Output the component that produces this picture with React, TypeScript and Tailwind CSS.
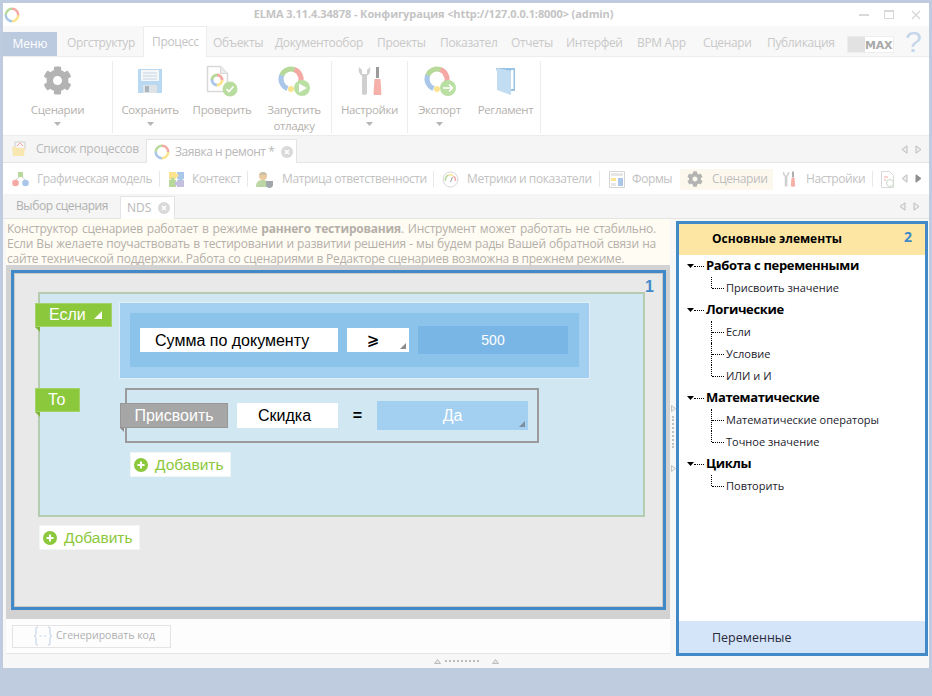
import React from "react";
import { FaCog } from "react-icons/fa";

const G = "#b7d99a", R = "#f4a9a4", Y = "#fbe38f", B = "#aac7ea";

function Ring({ size = 30, sw = 6 }: { size?: number; sw?: number }) {
  const r = 16 - sw / 2 - 1;
  const c = 2 * Math.PI * r;
  const seg = c / 4;
  return (
    <svg width={size} height={size} viewBox="0 0 32 32" className="shrink-0">
      {[[G, 180], [R, 270], [Y, 0], [B, 90]].map(([col, rot], i) => (
        <circle key={i} cx="16" cy="16" r={r} fill="none" stroke={col as string} strokeWidth={sw}
          strokeDasharray={`${seg} ${c - seg}`} transform={`rotate(${rot} 16 16)`} />
      ))}
    </svg>
  );
}

function BadgeRing({ kind }: { kind: "run" | "export" | "check" }) {
  return (
    <svg width="34" height="32" viewBox="0 0 34 32">
      <circle cx="14" cy="14" r="10" fill="none" stroke={G} strokeWidth="5" strokeDasharray="16 47" transform="rotate(200 14 14)" />
      <circle cx="14" cy="14" r="10" fill="none" stroke={R} strokeWidth="5" strokeDasharray="16 47" transform="rotate(290 14 14)" />
      <circle cx="14" cy="14" r="10" fill="none" stroke={B} strokeWidth="5" strokeDasharray="16 47" transform="rotate(110 14 14)" />
      <circle cx="14" cy="24" r="3" fill={Y} />
      <path d="M22 4l5 10-7-3z" fill={R} />
      <circle cx="25" cy="23" r="8" fill={kind === "check" ? "#b7dc9c" : "#b9dfa3"} />
      {kind === "run" && <path d="M22 18.500l8 4.500-8 4.500z" fill="#fff" />}
      {kind === "export" && <path d="M20 23h9M26 19.500l3.500 3.500-3.500 3.500" stroke="#fff" strokeWidth="1.600" fill="none" />}
    </svg>
  );
}

function SaveIcon() {
  return (
    <svg width="26" height="26" viewBox="0 0 26 26">
      <path d="M1 1h24v24H1z" fill="#b9d9f2" />
      <path d="M4 2h18v11H4z" fill="#f4f6f8" />
      <path d="M6 5h14M6 8h14M6 11h14" stroke="#c6d6e4" />
      <path d="M6 17h14v8H6z" fill="#dfe3e6" />
      <path d="M8 18h4v6H8z" fill="#a9b4bd" />
    </svg>
  );
}

function CheckIcon() {
  return (
    <svg width="32" height="32" viewBox="0 0 32 32">
      <path d="M1.500 1.500h13l7 7v18h-20z" fill="#fff" stroke="#d9d9d9" strokeWidth="1.500" />
      <path d="M14.500 1.500v7h7" fill="#ececec" stroke="#d9d9d9" />
      <circle cx="11" cy="15" r="5" fill="none" stroke={R} strokeWidth="3" strokeDasharray="8 24" transform="rotate(270 11 15)" />
      <circle cx="11" cy="15" r="5" fill="none" stroke={G} strokeWidth="3" strokeDasharray="8 24" transform="rotate(180 11 15)" />
      <circle cx="11" cy="15" r="5" fill="none" stroke={B} strokeWidth="3" strokeDasharray="8 24" transform="rotate(90 11 15)" />
      <circle cx="11" cy="15" r="5" fill="none" stroke={Y} strokeWidth="3" strokeDasharray="8 24" />
      <circle cx="24" cy="24" r="7.500" fill="#b9dc9f" />
      <path d="M20.500 24l2.500 2.500 4.500-5" stroke="#fff" strokeWidth="1.600" fill="none" />
    </svg>
  );
}

function ToolsIcon({ s = 26 }: { s?: number }) {
  return (
    <svg width={s} height={s * 1.15} viewBox="0 0 26 30">
      <path d="M2 1c-1 4 0 7 3 9v18c0 1 5 1 5 0V10c3-2 4-5 3-9l-3 3v4H5V4z" fill="#cfcfcf" />
      <path d="M19 1h3v11h-3z" fill="#9a9a9a" />
      <path d="M17.500 13h6l1 15c0 2-8 2-8 0z" fill="#f6b0aa" />
    </svg>
  );
}

function BookIcon() {
  return (
    <svg width="20" height="28" viewBox="0 0 20 28">
      <path d="M0 1h19v23H6z" fill="#9ac3e3" />
      <path d="M1 1l14 3v24L1 23z" fill="#c2dcf1" />
      <path d="M15 3h2.500v19H15z" fill="#fff" />
    </svg>
  );
}

function Folder() {
  return (
    <svg width="16" height="16" viewBox="0 0 16 16">
      <path d="M3 1h10v7H3z" fill="#f6f6f6" stroke="#cfcfcf" />
      <path d="M5 5l3-3 3 3" stroke={R} fill="none" />
      <path d="M0 6h5l1 1h7l-1 8H1z" fill="#f9e7b2" />
    </svg>
  );
}

function GraphIcon() {
  return (
    <svg width="17" height="16" viewBox="0 0 17 16">
      <path d="M8.500 4L3 10M8.500 4l5.500 6" stroke="#cdcdcd" />
      <path d="M6 1h5v5H6z" fill="#b7d99a" />
      <circle cx="3.500" cy="12" r="3.300" fill={R} />
      <circle cx="13.500" cy="12" r="3.300" fill={B} />
    </svg>
  );
}

function PuzzleIcon() {
  return (
    <svg width="17" height="17" viewBox="0 0 17 17">
      <path d="M1 1h7v7H1z" fill="#fbe38f" />
      <path d="M9 1h7v7H9z" fill={B} />
      <path d="M1 9h7v7H1z" fill={G} />
      <path d="M9 9h7v7H9z" fill="#c4c0dd" />
      <circle cx="8.500" cy="4.500" r="2" fill="#fbe38f" />
      <circle cx="4.500" cy="8.500" r="2" fill={G} />
      <circle cx="12.500" cy="8.500" r="2" fill={B} />
      <circle cx="8.500" cy="12.500" r="2" fill="#c4c0dd" />
    </svg>
  );
}

function UserIcon() {
  return (
    <svg width="17" height="17" viewBox="0 0 17 17">
      <circle cx="7" cy="5" r="4" fill="#eacb9f" />
      <path d="M3 4c1-4 7-4 8 0z" fill="#c9c0a8" />
      <path d="M0 16c0-6 3-7 7-7s6 2 6 7z" fill="#bcd6a6" />
      <path d="M10 10h7v4c0 2-2 3-3.500 3S10 16 10 14z" fill="#9fa7ad" />
    </svg>
  );
}

function GaugeIcon() {
  return (
    <svg width="17" height="17" viewBox="0 0 17 17">
      <circle cx="8.500" cy="8.500" r="7.500" fill="#fff" stroke="#d8d8d8" />
      <path d="M3.500 10a5.500 5.500 0 0 1 3-6" stroke={G} strokeWidth="1.500" fill="none" />
      <path d="M7 4a5.500 5.500 0 0 1 4 .6" stroke={Y} strokeWidth="1.500" fill="none" />
      <path d="M11.500 5a5.500 5.500 0 0 1 2 5" stroke={R} strokeWidth="1.500" fill="none" />
      <path d="M8.500 11l2-5" stroke="#9a9a9a" />
    </svg>
  );
}

function FormIcon() {
  return (
    <svg width="16" height="17" viewBox="0 0 16 17">
      <path d="M.5.500h15v16H.5z" fill="#fff" stroke="#d5d5d5" />
      <path d="M2 2h12v3H2z" fill="#e6e6e6" />
      <path d="M2 7h5v3H2z" fill={Y} />
      <path d="M9 7h5v8H9z" fill={B} />
      <path d="M2 12h5v3H2z" fill="#e6e6e6" />
    </svg>
  );
}

function DocClock() {
  return (
    <svg width="13" height="17" viewBox="0 0 13 17">
      <path d="M.5.500h8l4 4v12H.5z" fill="#fff" stroke="#d8d8d8" />
      <path d="M3 6h4M3 9h2" stroke={R} />
      <circle cx="9" cy="12" r="3.500" fill="#fff" stroke="#c8d8c8" />
    </svg>
  );
}

function BraceIcon() {
  return (
    <svg width="20" height="20" viewBox="0 0 20 20" className="shrink-0">
      <path d="M5 1C2.500 1 3 3 3 6c0 3-1 4-2 4 1 0 2 1 2 4 0 3-.5 5 2 5M15 1c2.500 0 2 2 2 5 0 3 1 4 2 4-1 0-2 1-2 4 0 3 .5 5-2 5" fill="none" stroke="#d3e0ee" strokeWidth="1.600" />
      <path d="M6.500 10h2M11 10h2" stroke="#d3e0ee" strokeWidth="1.400" />
    </svg>
  );
}

function XDot({ cls = "" }: { cls?: string }) {
  return (
    <svg width="12" height="12" viewBox="0 0 12 12" className={`shrink-0 ${cls}`}>
      <circle cx="6" cy="6" r="6" fill="#d9d9d9" />
      <path d="M4 4l4 4M8 4l-4 4" stroke="#fff" strokeWidth="1.500" />
    </svg>
  );
}

function Arrows({ solid = false }: { solid?: boolean }) {
  return (
    <div className="flex gap-[7px] items-center">
      <svg width="7" height="9" viewBox="0 0 7 9"><path d="M6 .8L1 4.500 6 8.200z" fill="#ededed" stroke="#bdbdbd" /></svg>
      <svg width="7" height="9" viewBox="0 0 7 9"><path d="M1 .8L6 4.500 1 8.200z" fill={solid ? "#8f8f8f" : "#ededed"} stroke={solid ? "#8f8f8f" : "#bdbdbd"} /></svg>
    </div>
  );
}

function Caret() {
  return <svg width="7" height="4" viewBox="0 0 7 4"><path d="M0 0h7L3.500 4z" fill="#b5b5b5" /></svg>;
}

const menu: [string, number, number][] = [
  ["Оргструктур", 86, 10],
  ["Процесс", 64, 8],
  ["Объекты", 62, 6],
  ["Документообор", 101, 6],
  ["Проекты", 63, 7],
  ["Показател", 71, 7],
  ["Отчеты", 55, 7],
  ["Интерфей", 71, 7],
  ["BPM App", 66, 7],
  ["Сценари", 64, 7],
  ["Публикация", 87, 7],
];

function RibbonItem({ w, icon, label, label2, caret }: { w: string; icon: React.ReactNode; label: string; label2?: string; caret?: boolean }) {
  return (
    <div className={`${w} flex flex-col items-center shrink-0`}>
      <div className="h-[31px] mt-[8px] flex items-center justify-center">{icon}</div>
      <div className="mt-[6px] h-[16px] leading-[16px] text-[11.500px] tracking-[-0.35px] text-[#b5b1ad] whitespace-nowrap">{label}</div>
      {label2 && <div className="h-[16px] leading-[16px] text-[11.500px] tracking-[-0.35px] text-[#b5b1ad]">{label2}</div>}
      {caret && <div className="mt-[4px]"><Caret /></div>}
    </div>
  );
}

const Sep = () => <div className="w-px h-[72px] mt-[4px] bg-[#ececec] shrink-0" />;
const SubSep = () => <div className="w-px h-[16px] bg-[#e8e8e8] shrink-0" />;

function Sub({ icon, text, iw, gap, tw, cls = "" }: { icon: React.ReactNode; text: string; iw: string; gap: string; tw: string; cls?: string }) {
  return (
    <div className={`flex items-center shrink-0 ${cls}`}>
      <div className={`${iw} flex justify-center shrink-0`}>{icon}</div>
      <span className={`${gap} ${tw} text-[12px] text-[#c2c2c2] whitespace-nowrap tracking-[-0.4px]`}>{text}</span>
    </div>
  );
}

function Tag({ children, w }: { children: React.ReactNode; w: string }) {
  return (
    <div className={`relative ${w} h-[24px] bg-[#8cc83c] border border-[#a4d36b] shrink-0 flex items-center text-[16px] text-white`}>
      {children}
      <div className="absolute left-[-1px] top-[23px] w-0 h-0 border-t-[5px] border-l-[5px] border-t-[#7fb53a] border-l-transparent" />
    </div>
  );
}

function Corner({ color = "#8c8c8c" }: { color?: string }) {
  return (
    <svg width="6" height="6" viewBox="0 0 6 6" className="absolute right-[3px] bottom-[3px]">
      <path d="M6 0v6H0z" fill={color} />
    </svg>
  );
}

function AddBtn({ cls }: { cls: string }) {
  return (
    <div className={`w-[101px] h-[25px] bg-white border border-[#f0f5f5] flex items-center pl-[3px] ${cls}`}>
      <svg width="14" height="14" viewBox="0 0 14 14" className="shrink-0">
        <circle cx="7" cy="7" r="7" fill="#8cc83c" />
        <path d="M7 3.500v7M3.500 7h7" stroke="#fff" strokeWidth="2" />
      </svg>
      <span className="ml-[7px] text-[15.500px] text-[#8cc83c] font-['Liberation_Sans',sans-serif]">Добавить</span>
    </div>
  );
}

function Group({ title }: { title: string }) {
  return (
    <div className="h-[22px] flex items-center pl-[8px]">
      <svg width="7" height="4" viewBox="0 0 7 4" className="shrink-0"><path d="M0 0h7L3.500 4z" fill="#000" /></svg>
      <div className="w-[10px] border-b border-dotted border-black shrink-0" />
      <span className="ml-[2px] text-[13px] font-bold tracking-[-0.35px] text-black whitespace-nowrap">{title}</span>
    </div>
  );
}

function Leaf({ title, last }: { title: string; last?: boolean }) {
  return (
    <div className="h-[22px] flex items-center pl-[32px]">
      <div className={`border-l border-dotted border-black shrink-0 self-start ${last ? "h-[11px]" : "h-[22px]"}`} />
      <div className="w-[12px] border-b border-dotted border-black shrink-0" />
      <span className="ml-[2px] text-[11px] text-[#1b1b2b] whitespace-nowrap">{title}</span>
    </div>
  );
}

export default function App() {
  return (
    <div className="w-[932px] h-[696px] bg-[#bfcbdf] pt-[3px] pl-[3px] pr-[3px] overflow-hidden font-['Open_Sans','Noto_Sans',sans-serif]">
      <div className="h-[665px] bg-white flex flex-col">
        {/* title */}
        <div className="h-[23px] flex items-center shrink-0 relative">
          <div className="ml-[1px]"><Ring size={16} sw={5} /></div>
          <div className="flex-1 text-center text-[11px] font-bold text-[#c4c4c4] tracking-[-0.1px] pr-[12px] whitespace-nowrap">ELMA 3.11.4.34878 - Конфигурация &lt;http://127.0.0.1:8000&gt; (admin)</div>
          <div className="flex items-center pr-[8px]">
            <div className="w-[10px] h-[2px] bg-[#d9d9d9]" />
            <div className="ml-[15px] w-[10px] h-[9px] border border-[#d9d9d9] border-t-2" />
            <svg width="10" height="10" viewBox="0 0 10 10" className="ml-[17px]"><path d="M1 1l8 8M9 1l-8 8" stroke="#d9d9d9" strokeWidth="1.500" /></svg>
          </div>
        </div>
        {/* menu */}
        <div className="h-[31px] bg-[#f8f8f8] border-b border-[#ededed] flex items-end shrink-0">
          <div className="w-[54px] h-[24px] bg-[#bccadf] text-white text-[12px] flex items-center justify-center shrink-0">Меню</div>
          {menu.map(([t, w, pl]) => (
            <div key={t} style={{ width: w, paddingLeft: pl }}
              className={`shrink-0 flex items-center text-[12px] tracking-[-0.35px] whitespace-nowrap ${t === "Процесс" ? "h-[31px] bg-white border-x border-t border-[#ededed] text-[#c4c4c4] mb-[-1px]" : "h-[26px] text-[#c9c9c9]"}`}>
              {t}
            </div>
          ))}
          <div className="w-[47px] h-[17px] mb-[3px] bg-white border border-[#ededed] flex shrink-0">
            <div className="w-[17px] bg-[#e2e2e2]" />
            <div className="flex-1 text-[11px] leading-[17px] font-bold text-[#a9a9a9] font-['DejaVu_Sans',sans-serif] tracking-[-0.2px]">MAX</div>
          </div>
          <div className="ml-[11px] h-[30px] text-[30px] leading-[31px] text-[#c6d6ea] font-['Liberation_Sans',sans-serif]">?</div>
        </div>
        {/* ribbon */}
        <div className="h-[79px] flex shrink-0 border-b border-[#ececec] text-center">
          <RibbonItem w="w-[109px]" icon={<FaCog size={29} color="#b3b3b3" />} label="Сценарии" caret />
          <Sep />
          <RibbonItem w="w-[74px]" icon={<SaveIcon />} label="Сохранить" caret />
          <RibbonItem w="w-[70px]" icon={<CheckIcon />} label="Проверить" />
          <RibbonItem w="w-[74px]" icon={<BadgeRing kind="run" />} label="Запустить" label2="отладку" />
          <Sep />
          <RibbonItem w="w-[75px]" icon={<ToolsIcon />} label="Настройки" caret />
          <Sep />
          <RibbonItem w="w-[63px]" icon={<BadgeRing kind="export" />} label="Экспорт" caret />
          <RibbonItem w="w-[69px]" icon={<BookIcon />} label="Регламент" />
          <Sep />
        </div>
        {/* tabs 1 */}
        <div className="h-[27px] bg-[#f5f5f5] border-b border-[#e4e4e4] flex items-end shrink-0">
          <div className="h-[26px] flex items-center pl-[9px] w-[143px] shrink-0">
            <Folder />
            <span className="ml-[8px] text-[12px] text-[#b8b8b8] tracking-[-0.25px] whitespace-nowrap">Список процессов</span>
          </div>
          <div className="h-[24px] w-[151px] mb-[-1px] bg-white border-x border-t border-[#e4e4e4] flex items-center pl-[7px] shrink-0">
            <Ring size={16} sw={5} />
            <span className="ml-[5px] w-[100px] text-[12px] text-[#b8b8b8] tracking-[-0.45px] whitespace-nowrap">Заявка н ремонт *</span>
            <XDot cls="ml-[6px]" />
          </div>
          <div className="ml-auto h-[26px] flex items-center pr-[7px]"><Arrows /></div>
        </div>
        {/* tabs 2 */}
        <div className="h-[31px] bg-white flex items-center pl-[9px] pt-[1px] shrink-0 relative">
          <Sub icon={<GraphIcon />} text="Графическая модель" iw="w-[17px]" gap="ml-[8px]" tw="w-[116px]" />
          <div className="ml-[6px]"><SubSep /></div>
          <Sub icon={<PuzzleIcon />} text="Контекст" iw="w-[17px]" gap="ml-[7px]" tw="w-[49px]" cls="ml-[8px]" />
          <div className="ml-[6px]"><SubSep /></div>
          <Sub icon={<UserIcon />} text="Матрица ответственности" iw="w-[17px]" gap="ml-[9px]" tw="w-[143px]" cls="ml-[8px]" />
          <div className="ml-[8px]"><SubSep /></div>
          <Sub icon={<GaugeIcon />} text="Метрики и показатели" iw="w-[17px]" gap="ml-[8px]" tw="w-[124px]" cls="ml-[8px]" />
          <div className="ml-[8px]"><SubSep /></div>
          <Sub icon={<FormIcon />} text="Формы" iw="w-[16px]" gap="ml-[7px]" tw="w-[41px]" cls="ml-[9px]" />
          <div className="ml-[7px] w-[93px] h-[21px] bg-[#fdf8ee] flex items-center pl-[7px] shrink-0">
            <FaCog size={16} color="#b3b3b3" />
            <span className="ml-[9px] text-[12px] text-[#bdbdbd] tracking-[-0.4px]">Сценарии</span>
          </div>
          <Sub icon={<ToolsIcon s={14} />} text="Настройки" iw="w-[14px]" gap="ml-[10px]" tw="w-[60px]" cls="ml-[9px]" />
          <div className="ml-[6px]"><SubSep /></div>
          <div className="ml-[8px] shrink-0"><DocClock /></div>
          <div className="absolute right-[7px] top-0 h-[31px] w-[27px] flex items-center justify-end bg-white"><Arrows solid /></div>
        </div>
        {/* tabs 3 */}
        <div className="h-[25px] bg-[#f5f5f5] border-b border-[#e4e4e4] flex items-end shrink-0">
          <div className="h-[24px] w-[117px] flex items-center pl-[13px] shrink-0 text-[12px] text-[#b0b0b0] tracking-[-0.4px] whitespace-nowrap">Выбор сценария</div>
          <div className="h-[23px] w-[55px] mb-[-1px] bg-white border-x border-t border-[#e4e4e4] flex items-center pl-[6px] shrink-0">
            <span className="text-[12px] text-[#b8b8b8]">NDS</span>
            <XDot cls="ml-[7px]" />
          </div>
          <div className="ml-auto h-[24px] flex items-center pr-[9px]"><Arrows /></div>
        </div>
        {/* body */}
        <div className="flex-1 flex bg-[#f7f7f7] min-h-0">
          <div className="w-[667px] shrink-0 pl-[3px] flex flex-col">
            <div className="h-[46px] bg-[#fffcf4] pl-[1px] pr-[14px] pt-[2px] text-[12px] leading-[15px] tracking-[-0.21px] text-[#b4afa8] shrink-0">
              <div className="[text-align-last:justify] whitespace-nowrap">Конструктор сценариев работает в режиме <b>раннего тестирования</b>. Инструмент может работать не стабильно.</div>
              <div className="[text-align-last:justify] whitespace-nowrap">Если Вы желаете поучаствовать в тестировании и развитии решения - мы будем рады Вашей обратной связи на</div>
              <div className="whitespace-nowrap">сайте технической поддержки. Работа со сценариями в Редакторе сценариев возможна в прежнем режиме.</div>
            </div>
            {/* canvas */}
            <div className="h-[354px] bg-[#d2d2d2] pl-[5px] pr-[4px] pt-[5px] shrink-0">
              <div className="h-[340px] border-[3px] border-[#4189c7] bg-[#e9e9e9] shadow-[inset_0_0_0_1px_#c9c9c9] relative pl-[24px] pt-[19px] font-['Liberation_Sans',sans-serif]">
                <div className="absolute right-[9px] top-[2px] text-[16px] font-bold text-[#4189c7]">1</div>
                <div className="w-[607px] h-[225px] bg-[#d1e8f2] border-2 border-[#b5ccb0]">
                  <div className="flex items-start pt-[8px]">
                    <div className="ml-[-5px] mt-[1px]">
                      <Tag w="w-[77px]">
                        <span className="ml-[13px]">Если</span>
                        <svg width="8" height="8" viewBox="0 0 8 8" className="ml-[8px]"><path d="M8 0v8H0z" fill="#fff" /></svg>
                      </Tag>
                    </div>
                    <div className="ml-[7px] w-[471px] h-[77px] bg-[#a3d0f1] border border-[#e1f0f8] p-[10px] shrink-0">
                      <div className="h-[54px] bg-[#8cc3eb] flex items-center pl-[10px]">
                        <div className="w-[198px] h-[24px] bg-white flex items-center pl-[15px] pt-[1px] text-[16px] text-black shrink-0 whitespace-nowrap">Сумма по документу</div>
                        <div className="ml-[9px] relative w-[62px] h-[24px] bg-white flex items-center justify-center pr-[10px] shrink-0 text-[15px] font-bold text-black font-['DejaVu_Sans',sans-serif]">
                          ⩾<Corner />
                        </div>
                        <div className="ml-[9px] w-[150px] h-[28px] bg-[#7ab6e5] flex items-center justify-center text-[14px] text-white shrink-0">500</div>
                      </div>
                    </div>
                  </div>
                  <div className="flex items-start mt-[9px]">
                    <div className="ml-[-5px]">
                      <Tag w="w-[45px]"><span className="ml-[12px]">То</span></Tag>
                    </div>
                    <div className="ml-[45px] shrink-0">
                      <div className="w-[414px] h-[55px] border-2 border-[#9b9b9b] flex items-center">
                        <div className="ml-[-7px] relative w-[108px] h-[25px] bg-[#a6a6a6] border border-[#979797] flex items-center justify-center text-[16px] text-white shrink-0">
                          Присвоить
                          <div className="absolute left-[-1px] top-[24px] w-0 h-0 border-t-[4px] border-l-[4px] border-t-[#8f8f8f] border-l-transparent" />
                        </div>
                        <div className="ml-[9px] w-[101px] h-[25px] bg-white flex items-center justify-center pr-[6px] text-[16px] text-black shrink-0">Скидка</div>
                        <div className="w-[39px] text-center text-[16px] font-bold text-black shrink-0">=</div>
                        <div className="relative w-[151px] h-[29px] bg-[#a3d0f1] flex items-center justify-center text-[16px] text-white shrink-0">
                          Да<Corner color="#7d8e9c" />
                        </div>
                      </div>
                      <AddBtn cls="mt-[9px] ml-[5px]" />
                    </div>
                  </div>
                </div>
                <AddBtn cls="mt-[8px] ml-[1px]" />
              </div>
            </div>
            <div className="h-[35px] bg-[#fdfdfd] border-b border-[#e4e4e4] flex items-center pl-[6px] shrink-0">
              <div className="w-[159px] h-[23px] border border-[#e4e4e4] flex items-center pl-[20px]">
                <BraceIcon />
                <span className="ml-[3px] text-[10.500px] text-[#b0b0b0] whitespace-nowrap">Сгенерировать код</span>
              </div>
            </div>
            <div className="flex-1 flex items-center pl-[428px] gap-[4px]">
              <svg width="7" height="5" viewBox="0 0 7 5"><path d="M3.500.500L6.500 4.500h-6z" fill="#e8e8e8" stroke="#bbb" /></svg>
              <div className="w-[34px] border-t-2 border-dotted border-[#bbb]" />
              <svg width="7" height="5" viewBox="0 0 7 5" className="ml-[9px]"><path d="M3.500.500L6.500 4.500h-6z" fill="#e8e8e8" stroke="#bbb" /></svg>
            </div>
          </div>
          {/* splitter */}
          <div className="w-[6px] shrink-0 flex flex-col items-center pt-[186px]">
            <svg width="5" height="7" viewBox="0 0 5 7"><path d="M.5.500L4.500 3.500.5 6.500z" fill="#eee" stroke="#c2c2c2" /></svg>
            <div className="h-[32px] mt-[4px] border-l-2 border-dotted border-[#c2c2c2]" />
            <svg width="5" height="7" viewBox="0 0 5 7" className="mt-[17px]"><path d="M.5.500L4.500 3.500.5 6.500z" fill="#eee" stroke="#c2c2c2" /></svg>
          </div>
          {/* right */}
          <div className="w-[252px] h-[435px] mt-[2px] border-[3px] border-[#4189c7] bg-white flex flex-col shrink-0">
            <div className="h-[31px] bg-[#fde6a4] flex items-center pl-[33px] pb-[2px] relative shrink-0">
              <span className="text-[12px] font-bold text-black">Основные элементы</span>
              <span className="absolute right-[13px] top-[2px] text-[14px] font-bold text-[#4189c7]">2</span>
            </div>
            <div className="flex-1">
              <Group title="Работа с переменными" />
              <Leaf title="Присвоить значение" last />
              <Group title="Логические" />
              <Leaf title="Если" />
              <Leaf title="Условие" />
              <Leaf title="ИЛИ и И" last />
              <Group title="Математические" />
              <Leaf title="Математические операторы" />
              <Leaf title="Точное значение" last />
              <Group title="Циклы" />
              <Leaf title="Повторить" last />
            </div>
            <div className="h-[32px] bg-[#d4e5fa] flex items-center pl-[33px] pt-[2px] text-[12.500px] text-[#2a2a3a] shrink-0">Переменные</div>
          </div>
        </div>
      </div>
    </div>
  );
}
